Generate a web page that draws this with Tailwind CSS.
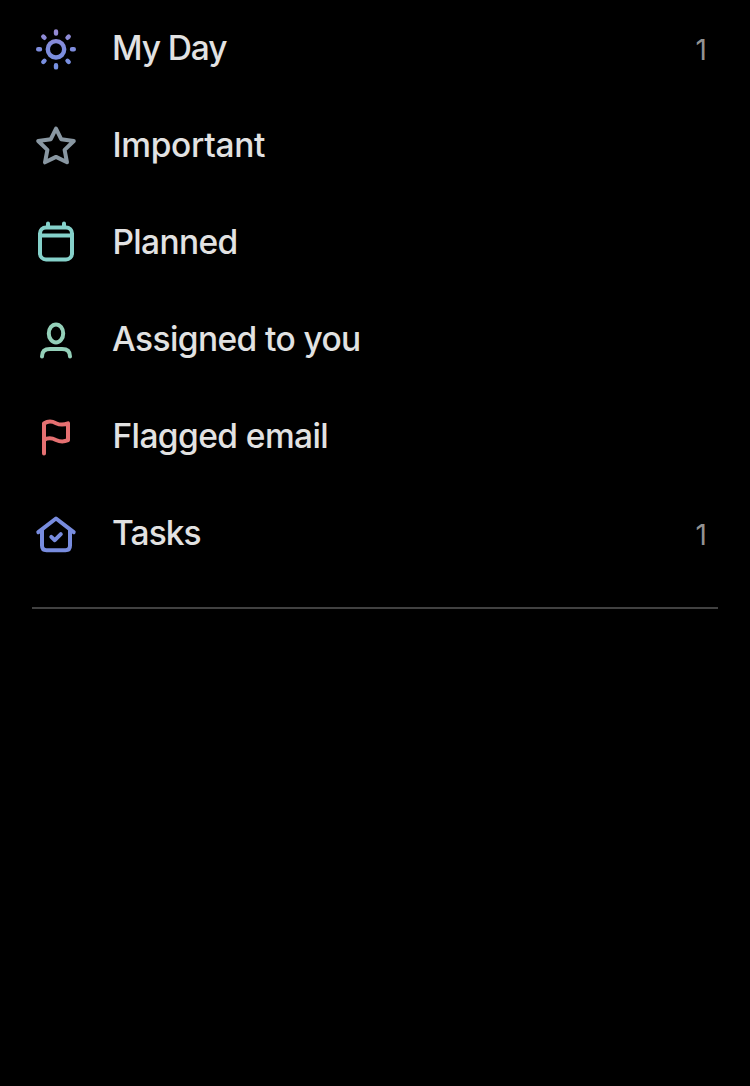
<!DOCTYPE html>
<html lang="en">
<head>
<meta charset="utf-8">
<title>Lists</title>
<script src="https://cdn.jsdelivr.net/npm/@tailwindcss/browser@4"></script>
</head>
<body class="bg-black min-h-screen font-['Inter',sans-serif] text-[#e2e2e2] overflow-hidden">
<nav class="flex flex-col text-[33.5px] leading-[97px] whitespace-nowrap">
  <a class="flex h-[97px] pl-[26px] pr-[43px]">
    <svg class="w-[60px] h-[97px] shrink-0" viewBox="0 0 60 97" fill="none" stroke="url(#sun)" stroke-width="4.4" stroke-linecap="round">
      <defs><linearGradient id="sun" gradientUnits="userSpaceOnUse" x1="30" y1="29" x2="30" y2="70"><stop stop-color="#9a8ad2"/><stop offset=".45" stop-color="#7f8cdc"/><stop offset="1" stop-color="#7591e2"/></linearGradient></defs>
      <circle cx="30" cy="49.3" r="8.2"/>
      <path d="M30 31.4L30.01 33.6M30 65.2L30.01 67.4M12.2 49.3H14M46 49.3H47.8M17.3 36.6L18.5 37.8M41.5 60.8L42.7 62M42.7 36.6L41.5 37.8M18.5 60.8L17.3 62"/>
    </svg>
    <span class="ml-[26px] grow font-[450] tracking-[-1.1px]">My Day</span>
    <span class="text-[28px] leading-[100px] text-[#929292]">1</span>
  </a>
  <a class="flex h-[97px] pl-[26px] pr-[43px]">
    <svg class="w-[60px] h-[97px] shrink-0" viewBox="0 0 60 97" fill="none" stroke="#8997a2" stroke-width="4" stroke-linejoin="round">
      <path d="M30 31.6L35.2 42.2L47.8 44L38.6 52.9L41 65.3L30 59.9L19 65.3L21.4 52.9L12.2 44L24.8 42.2Z"/>
    </svg>
    <span class="ml-[26.4px] grow font-[450] tracking-[-0.3px]">Important</span>
  </a>
  <a class="flex h-[97px] pl-[26px] pr-[43px]">
    <svg class="w-[60px] h-[97px] shrink-0" viewBox="0 0 60 97" fill="none" stroke="#85d1ca" stroke-width="4" stroke-linecap="round">
      <rect x="14" y="33.4" width="32" height="32" rx="6"/>
      <path d="M14 41.6H46M22 29.6V33M38 29.6V33"/>
    </svg>
    <span class="ml-[26.4px] grow font-[450] tracking-[-0.65px]">Planned</span>
  </a>
  <a class="flex h-[97px] pl-[26px] pr-[43px]">
    <svg class="w-[60px] h-[97px] shrink-0" viewBox="0 0 60 97" fill="none" stroke="#94d0b9" stroke-width="4" stroke-linecap="round">
      <ellipse cx="30" cy="42.4" rx="7.2" ry="9"/>
      <path d="M16 65.4C16 60.5 19 58 24 58H36C41 58 44 60.5 44 65.4"/>
    </svg>
    <span class="ml-[26px] grow font-[450] tracking-[-0.6px]">Assigned to you</span>
  </a>
  <a class="flex h-[97px] pl-[26px] pr-[43px]">
    <svg class="w-[60px] h-[97px] shrink-0" viewBox="0 0 60 97" fill="none" stroke="#e57071" stroke-width="4" stroke-linecap="round" stroke-linejoin="round">
      <path d="M18 65.6V35.5C22 32.8 26.5 33.4 30 35.2C34 37.1 38 37 42 35.3V52.2C38 53.9 34 53.8 30 52C26.5 50.3 22 49.5 18 52"/>
    </svg>
    <span class="ml-[26.4px] grow font-[450] tracking-[-0.58px]">Flagged email</span>
  </a>
  <a class="flex h-[97px] pl-[26px] pr-[43px]">
    <svg class="w-[60px] h-[97px] shrink-0" viewBox="0 0 60 97" fill="none" stroke="#788cde" stroke-width="4" stroke-linecap="round" stroke-linejoin="round">
      <path d="M12.3 47.2L30 33.5L47.7 47.2M16 45V60.5C16 63.5 17.5 65.3 20.5 65.3H39.5C42.5 65.3 44 63.5 44 60.5V45"/>
      <path d="M25.3 51.9L28.8 55.2L34.8 49.2"/>
    </svg>
    <span class="ml-[26px] grow font-[450] tracking-[-0.9px]">Tasks</span>
    <span class="text-[28px] leading-[100px] text-[#929292]">1</span>
  </a>
</nav>
<div class="mx-8 mt-[25px] h-[2px] bg-[#414141]"></div>
</body>
</html>
